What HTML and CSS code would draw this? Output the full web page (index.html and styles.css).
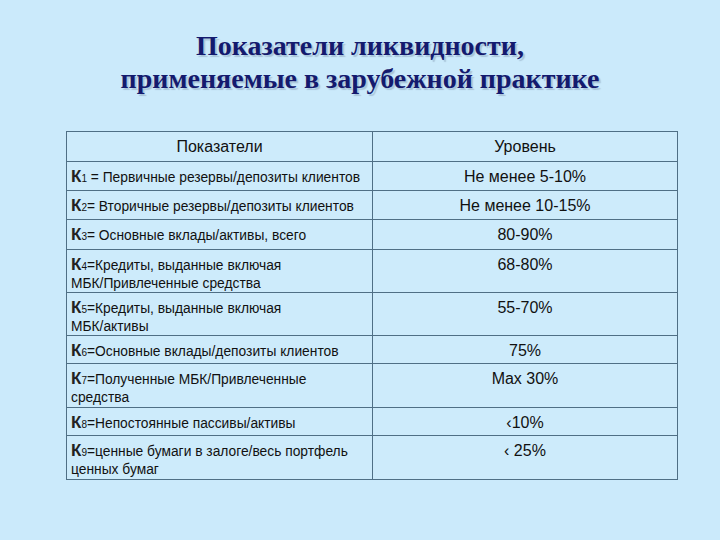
FILE: index.html
```html
<!DOCTYPE html>
<html lang="ru">
<head>
<meta charset="utf-8">
<title>Показатели ликвидности</title>
<link rel="stylesheet" href="styles.css">
</head>
<body>
<h1 class="title">Показатели ликвидности,<br>применяемые в зарубежной практике</h1>
<table class="grid">
  <tr class="row head">
    <th class="cell name">Показатели</th>
    <th class="cell val">Уровень</th>
  </tr>
  <tr class="row one">
    <td class="cell name"><span class="k">К</span><sub>1</sub> = Первичные резервы/депозиты клиентов</td>
    <td class="cell val">Не менее 5-10%</td>
  </tr>
  <tr class="row one">
    <td class="cell name"><span class="k">К</span><sub>2</sub>= Вторичные резервы/депозиты клиентов</td>
    <td class="cell val">Не менее 10-15%</td>
  </tr>
  <tr class="row one tall">
    <td class="cell name"><span class="k">К</span><sub>3</sub>= Основные вклады/активы, всего</td>
    <td class="cell val">80-90%</td>
  </tr>
  <tr class="row two">
    <td class="cell name"><span class="k">К</span><sub>4</sub>=Кредиты, выданные включая<br>МБК/Привлеченные средства</td>
    <td class="cell val">68-80%</td>
  </tr>
  <tr class="row two">
    <td class="cell name"><span class="k">К</span><sub>5</sub>=Кредиты, выданные включая<br>МБК/активы</td>
    <td class="cell val">55-70%</td>
  </tr>
  <tr class="row one short">
    <td class="cell name"><span class="k">К</span><sub>6</sub>=Основные вклады/депозиты клиентов</td>
    <td class="cell val">75%</td>
  </tr>
  <tr class="row two wide">
    <td class="cell name"><span class="k">К</span><sub>7</sub>=Полученные МБК/Привлеченные<br>средства</td>
    <td class="cell val">Max 30%</td>
  </tr>
  <tr class="row one short">
    <td class="cell name"><span class="k">К</span><sub>8</sub>=Непостоянные пассивы/активы</td>
    <td class="cell val">‹10%</td>
  </tr>
  <tr class="row two wide">
    <td class="cell name"><span class="k">К</span><sub>9</sub>=ценные бумаги в залоге/весь портфель<br>ценных бумаг</td>
    <td class="cell val">‹ 25%</td>
  </tr>
</table>
</body>
</html>
```
FILE: styles.css
```css
html, body {
  margin: 0;
  padding: 0;
}
body {
  width: 720px;
  height: 540px;
  background: #cbeafb;
  font-family: "Liberation Sans", Arial, sans-serif;
  color: #111;
  overflow: hidden;
}
.title {
  margin: 29px 0 0 0;
  text-align: center;
  font-family: "Liberation Serif", "Times New Roman", serif;
  font-weight: bold;
  font-size: 28px;
  line-height: 33px;
  color: #141a6e;
  text-shadow: 2px 2px 1px rgba(90, 110, 140, 0.3);
}
.grid {
  margin: 36px 0 0 66px;
  width: 612px;
  border-collapse: collapse;
  table-layout: fixed;
  background: #cdebfb;
}
.cell {
  border: 1px solid #4f6f85;
  padding: 6px 4px 0 4px;
  vertical-align: top;
  line-height: 17px;
  font-size: 13.8px;
  font-weight: normal;
  box-sizing: border-box;
}
.name {
  width: 306px;
  text-align: left;
}
.head .cell {
  font-size: 16px;
  padding-top: 6px;
}
.head .name {
  text-align: center;
}
.val {
  text-align: center;
  font-size: 16px;
}
.head { height: 30px; }
.one { height: 29px; }
.tall { height: 30px; }
.short { height: 28px; }
.two { height: 43px; }
.wide { height: 44px; }
.k {
  font-size: 17px;
  font-weight: bold;
  color: #222;
}
sub {
  font-size: 10px;
  vertical-align: baseline;
}
```
